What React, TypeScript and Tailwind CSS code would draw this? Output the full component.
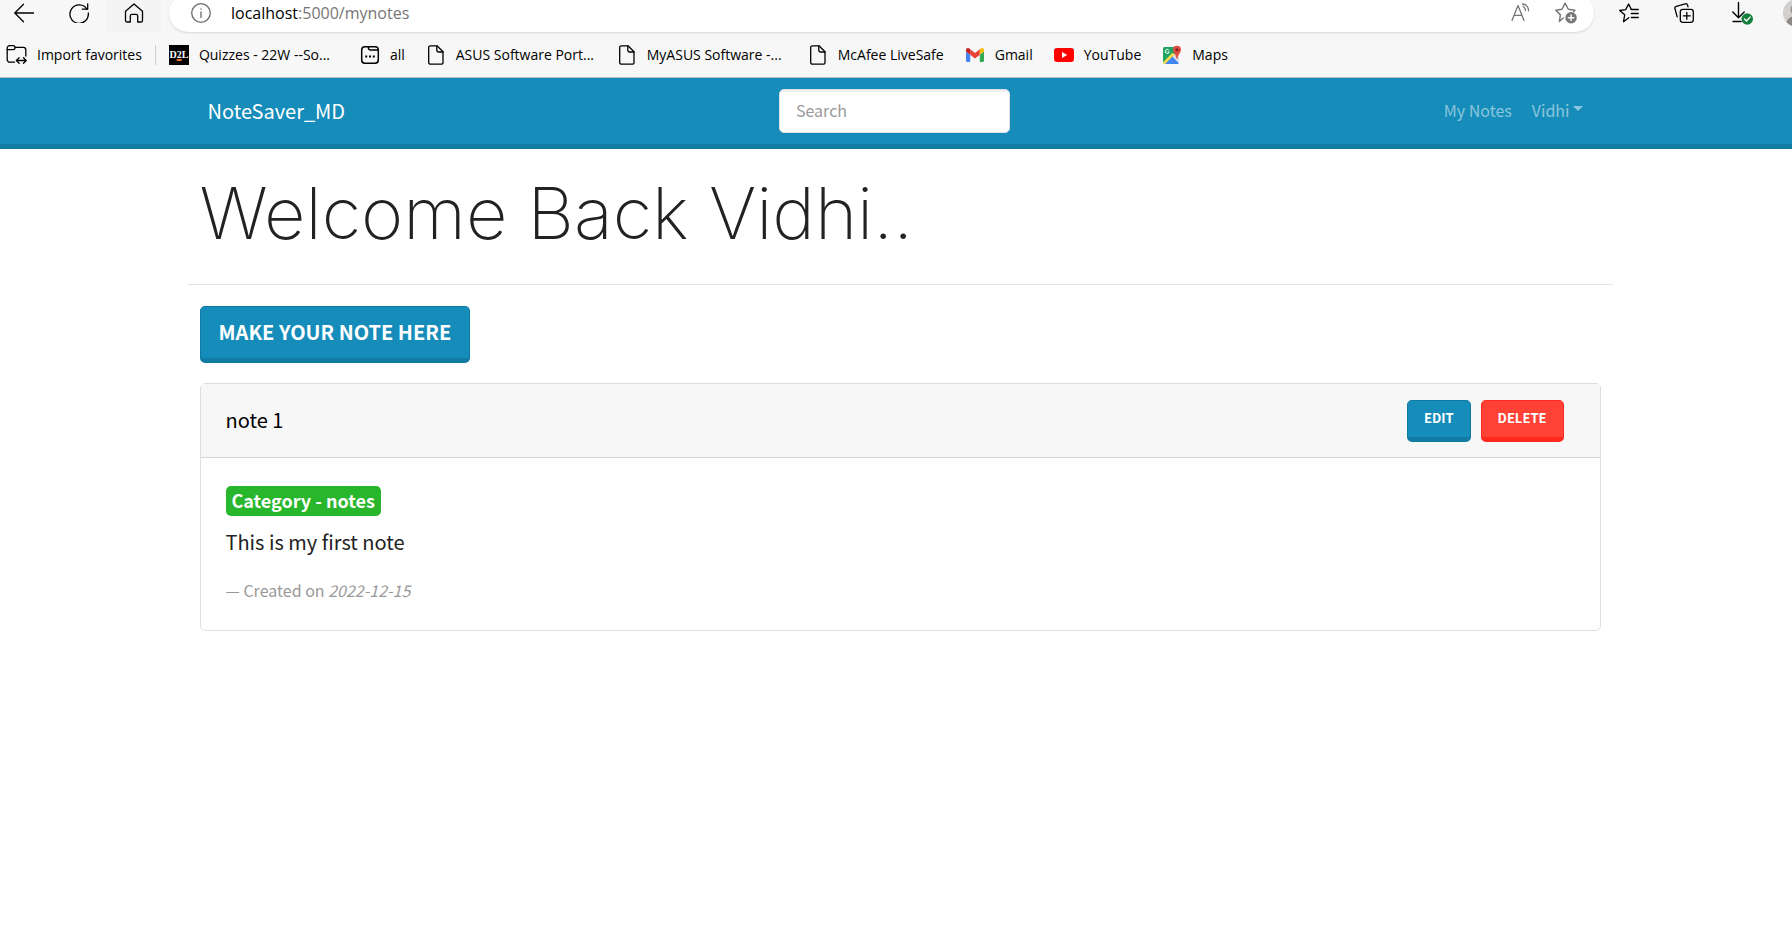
import type { ReactNode } from "react";

const ui = "font-['Open_Sans','Noto_Sans',sans-serif]";
const page = "font-['Noto_Sans_CJK_SC','Open_Sans',sans-serif]";

function Glyph({ children, className = "size-5" }: { children: ReactNode; className?: string }) {
  return (
    <svg
      viewBox="0 0 20 20"
      className={`${className} shrink-0`}
      fill="none"
      stroke="currentColor"
      strokeWidth="1.3"
      strokeLinecap="round"
      strokeLinejoin="round"
      aria-hidden="true"
    >
      {children}
    </svg>
  );
}

function ToolButton({ label, className = "", children }: { label: string; className?: string; children: ReactNode }) {
  return (
    <button type="button" aria-label={label} className={`flex w-[55px] shrink-0 items-center justify-center ${className}`}>
      {children}
    </button>
  );
}

function DocIcon() {
  return (
    <Glyph>
      <path d="M4.5.8H11l6 6v10.600a1.800 1.800 0 0 1-1.800 1.800H4.500a1.800 1.800 0 0 1-1.800-1.800V2.600A1.800 1.800 0 0 1 4.500.8Z" />
      <path d="M10.800.8v4.400A1.800 1.800 0 0 0 12.600 7H17" />
    </Glyph>
  );
}

function ImportIcon() {
  return (
    <Glyph className="h-5 w-[21px]">
      <path d="M8 17.200H3.300A2.600 2.600 0 0 1 .7 14.600V3A2.300 2.300 0 0 1 3 .7h3.700A2 2 0 0 1 8.600 2.400H17a2.300 2.300 0 0 1 2.300 2.300V11" />
      <path d="M.7 4.600H6.800a1.800 1.800 0 0 0 1.800-2.200" />
      <path d="M10.300 15.500h9M12.600 12.800l-2.700 2.700 2.700 2.700M17 12.800l2.700 2.700-2.700 2.700" />
    </Glyph>
  );
}

function D2LIcon() {
  return (
    <span className="flex size-5 shrink-0 items-center justify-center bg-black font-['Liberation_Serif',serif] text-[10px] leading-5 font-bold text-white">
      D<span className="underline decoration-[#e57025] decoration-2 underline-offset-1">2</span>L
    </span>
  );
}

function FolderDotsIcon() {
  return (
    <Glyph>
      <rect x="1.700" y="1.700" width="16.600" height="16.600" rx="3.200" strokeWidth="1.500" />
      <path d="M8.500 1.700v1.500A1.800 1.800 0 0 0 10.300 5h7.500" strokeWidth="1.500" />
      <path d="M5.200 11.500h2M9 11.500h2M12.800 11.500h2" strokeWidth="2" strokeLinecap="butt" />
    </Glyph>
  );
}

function GmailIcon() {
  return (
    <svg viewBox="0 0 20 20" className="size-5 shrink-0" aria-hidden="true">
      <path fill="#4285f4" d="M2.200 17h3V9.800L1 6.600v9.200C1 16.500 1.500 17 2.200 17Z" />
      <path fill="#34a853" d="M14.800 17h3c.7 0 1.200-.5 1.200-1.200V6.600l-4.200 3.200V17Z" />
      <path fill="#fbbc04" d="M14.800 4.300v5.500L19 6.600V5c0-1.600-1.800-2.500-3.100-1.500l-1.100.8Z" />
      <path fill="#ea4335" d="M5.200 9.800V4.300L10 7.900l4.800-3.600v5.500L10 13.400 5.200 9.800Z" />
      <path fill="#c5221f" d="M1 5v1.600l4.200 3.200V4.300l-1.100-.8C2.800 2.500 1 3.400 1 5Z" />
    </svg>
  );
}

function YouTubeIcon() {
  return (
    <svg viewBox="0 0 20 20" className="size-5 shrink-0" aria-hidden="true">
      <rect x="0" y="3" width="20" height="14" rx="3.200" fill="#f00" />
      <path d="M8 7v6l5.200-3L8 7Z" fill="#fff" />
    </svg>
  );
}

function MapsIcon() {
  return (
    <svg viewBox="0 0 20 20" className="size-5 shrink-0" aria-hidden="true">
      <path d="M2.500 2H16v4L3.500 18.500A1.800 1.800 0 0 1 1 17V3.500C1 2.700 1.700 2 2.500 2Z" fill="#1fa463" />
      <path d="M9.500 10.500 17 18.300c-.3.400-.8.600-1.300.6H3l6.500-8.400Z" fill="#4285f4" />
      <path d="M12.500 8.500 17 12v5.500l-6.500-6.500 2-2.500Z" fill="#dcdcdc" />
      <path d="M10.500 7.800 1 17.300c.2 1 1 1.600 2 1.600L12.500 9.500l-2-1.700Z" fill="#ffda44" />
      <path d="M6.800 5.200A2 2 0 1 0 7.200 7H5.400" fill="none" stroke="#fff" strokeWidth="1" />
      <path d="M15 .7a4 4 0 0 0-4 4c0 3.200 3 4.200 3.700 9.300h.6C16 8.900 19 7.900 19 4.700a4 4 0 0 0-4-4Z" fill="#dd4b3e" />
      <circle cx="15" cy="4.700" r="1.500" fill="#7a241d" />
    </svg>
  );
}

const bookmarks: { label: string; icon: ReactNode; clipped?: boolean }[] = [
  { label: "Quizzes - 22W --So...", icon: <D2LIcon />, clipped: true },
  { label: "all", icon: <FolderDotsIcon /> },
  { label: "ASUS Software Port...", icon: <DocIcon />, clipped: true },
  { label: "MyASUS Software -...", icon: <DocIcon />, clipped: true },
  { label: "McAfee LiveSafe", icon: <DocIcon /> },
  { label: "Gmail", icon: <GmailIcon /> },
  { label: "YouTube", icon: <YouTubeIcon /> },
  { label: "Maps", icon: <MapsIcon /> },
];

function BrowserBar() {
  return (
    <div className={`overflow-hidden border-b border-[#b9bfc2] bg-[#f7f7f7] text-black ${ui}`}>
      <div className="-mt-1.5 flex h-[38px]">
        <div className="flex w-[169px] shrink-0 justify-end pr-2">
          <ToolButton label="Back">
            <Glyph>
              <path d="M19.500 10H1M9.500 1.300.8 10l8.700 8.700" />
            </Glyph>
          </ToolButton>
          <ToolButton label="Refresh">
            <Glyph>
              <path d="M18 6.300A9.200 9.200 0 1 0 19.300 10" />
              <path d="M18.700.8v5.400h-5.400" />
            </Glyph>
          </ToolButton>
          <ToolButton label="Home" className="bg-[#f4f4f4]">
            <Glyph>
              <path d="M1.500 8.300 10 .9l8.500 7.400v9.100a1.600 1.600 0 0 1-1.600 1.600h-3.200V13a1.600 1.600 0 0 0-1.600-1.600H7.900A1.600 1.600 0 0 0 6.300 13v6H3.100a1.600 1.600 0 0 1-1.600-1.600V8.300Z" />
            </Glyph>
          </ToolButton>
        </div>
        <div className="flex grow items-center rounded-full bg-white pr-[17px] pl-[22px] shadow-sm">
          <Glyph className="size-5 text-[#6b6b6b]">
            <circle cx="10" cy="10" r="9.300" />
            <path d="M10 9v5.500M10 5.800v.4" />
          </Glyph>
          <span className="ml-5 grow text-[16px] leading-6 text-[#767676]">
            <span className="text-black">localhost</span>:5000/mynotes
          </span>
          <button type="button" aria-label="Read aloud" className="mr-6 text-[#767676]">
            <Glyph>
              <path d="m1 17.500 6-15 6 15M3.200 12.300h7.600" />
              <path d="M12.200 3.500c1.500 1 2.200 2.300 2.400 4M14 1.300c2.300 1.600 3.500 3.800 3.600 6.500M11.500 1c.8.200 1.500.500 2.200.8" />
            </Glyph>
          </button>
          <button type="button" aria-label="Add to favorites" className="text-[#767676]">
            <Glyph className="size-[22px]">
              <path d="M7.500 14.600 4 17.700l.9-6L.7 7.500l5.700-.9L9.200 1l2.900 5.600 6 .9-1 1.300" />
              <circle cx="14.600" cy="14.300" r="5.200" fill="currentColor" stroke="none" />
              <path d="M14.600 11.800v5M12.100 14.300h5" stroke="#fff" />
            </Glyph>
          </button>
        </div>
        <div className="flex w-[198px] shrink-0 overflow-hidden pl-[7px]">
          <ToolButton label="Favorites">
            <Glyph>
              <path d="M9.800 14.800 4.500 18.700l1.200-6.900L.7 7.500l6-.9L9.600 1l2.700 5.400" />
              <path d="M12.300 6.500h7M12.300 10.500h7M12.300 14.500h7" />
            </Glyph>
          </ToolButton>
          <ToolButton label="Collections">
            <Glyph>
              <rect x="6.300" y="6.300" width="13" height="13" rx="2.500" />
              <path d="M12.800 9.300v7M9.300 12.800h7" />
              <path d="M14 3.800 13.500 2A1.800 1.800 0 0 0 11.300.8L2.200 3.300A1.800 1.800 0 0 0 .9 5.500l2.300 8.300" />
            </Glyph>
          </ToolButton>
          <ToolButton label="Downloads" className="pl-1.5">
            <svg viewBox="0 0 22 24" className="h-6 w-[22px]" fill="none" stroke="currentColor" strokeWidth="1.400" strokeLinecap="round" aria-hidden="true">
              <path d="M7.500 1.500v15M1.800 11l5.700 5.700 5.700-5.700M2 20.500h8" />
              <circle cx="16.200" cy="18" r="5.800" fill="#15803d" stroke="none" />
              <path d="m13.500 18 2 2 3.600-3.900" stroke="#fff" />
            </svg>
          </ToolButton>
          <svg viewBox="0 0 28 28" className="ml-[17px] size-7 shrink-0 self-center" aria-hidden="true">
            <circle cx="14" cy="14" r="14" fill="#d2d0ce" />
            <circle cx="14" cy="10.500" r="6.500" fill="#979593" />
            <path d="M3.500 23c2-5 6-6 10.500-6s8.500 1 10.500 6a14 14 0 0 1-21 0Z" fill="#8a8886" />
          </svg>
        </div>
      </div>
      <nav aria-label="Bookmarks" className="flex h-[45px] items-center pl-1.5 text-[14px] leading-5 whitespace-nowrap">
        <a href="#import" className="flex items-center gap-2.5">
          <ImportIcon />
          Import favorites
        </a>
        <span className="mx-[13px] h-5 w-px bg-[#cfcfcf]" />
        <div className="flex gap-[21px]">
          {bookmarks.map((b) => (
            <a key={b.label} href="#bookmark" className={`flex items-center gap-2.5 ${b.clipped ? "w-[170px]" : ""}`}>
              {b.icon}
              {b.label}
            </a>
          ))}
        </div>
      </nav>
    </div>
  );
}

function Navbar() {
  return (
    <header className="border-b-[5px] border-[#127ba3] bg-[#158cba] pl-2">
      <div className="mx-auto flex h-[66px] max-w-[1425px] items-center justify-between pr-[29px] pl-5">
        <a href="#home" className="text-[20px] leading-8 text-white">
          NoteSaver_MD
        </a>
        <input
          type="search"
          aria-label="Search"
          placeholder="Search"
          className="h-11 w-[231px] rounded-[5px] border border-[#e0e0e0] bg-white px-4 pb-0.5 text-[16px] text-[#222] shadow-[inset_0_2px_0_#0000000f] placeholder:text-[#999]"
        />
        <nav className="flex items-center gap-5 pb-0.5 text-[16px] leading-6 text-white/50">
          <a href="#mynotes">My Notes</a>
          <button type="button" className="flex items-center gap-1">
            Vidhi
            <span className="-mt-1 border-x-[5px] border-t-[5px] border-x-transparent border-t-current" />
          </button>
        </nav>
      </div>
    </header>
  );
}

const button = "rounded-[5px] border border-b-[5px] font-bold text-white uppercase";
const blue = "border-[#127ba3] bg-[#158cba]";
const red = "border-[#ff291d] bg-[#ff4136]";

export default function App() {
  return (
    <div className={`min-h-screen bg-white text-[#222] ${page}`}>
      <BrowserBar />
      <Navbar />
      <div className="pl-2">
        <main className="mx-auto max-w-[1425px] pb-10">
          <h1 className="px-3 pt-4 font-['Inter',sans-serif] text-[72px] leading-[96px] font-extralight">
            Welcome Back Vidhi..
          </h1>
          <hr className="mt-[23px] border-[#e3e3e3]" />
          <div className="px-3 pt-[21px]">
            <button type="button" className={`${button} ${blue} h-[57px] px-[18px] pb-0.5 text-[20px] leading-7`}>
              Make your note here
            </button>
            <article className="mt-5 rounded-[5px] border border-[#dedede]">
              <div className="flex items-center justify-between border-b border-[#d5d5d5] bg-[#f7f7f7] pt-4 pr-9 pb-[15px] pl-[25px]">
                <h2 className="pb-0.5 text-[20px] leading-8 text-black">note 1</h2>
                <div className="flex gap-2.5">
                  <button type="button" className={`${button} ${blue} h-[42px] px-4 pb-0.5 text-[13px] leading-5`}>
                    Edit
                  </button>
                  <button type="button" className={`${button} ${red} h-[42px] px-4 pb-0.5 text-[13px] leading-5`}>
                    Delete
                  </button>
                </div>
              </div>
              <div className="px-[25px] pt-7 pb-7">
                <span className="inline-block rounded-[5px] bg-[#28b62c] px-1.5 pb-0.5 text-[18px] leading-7 font-bold text-white">
                  Category - notes
                </span>
                <p className="mt-2.5 text-[20px] leading-8">This is my first note</p>
                <footer className="mt-5 text-[16px] leading-6 text-[#999]">
                  — Created on <cite>2022-12-15</cite>
                </footer>
              </div>
            </article>
          </div>
        </main>
      </div>
    </div>
  );
}
